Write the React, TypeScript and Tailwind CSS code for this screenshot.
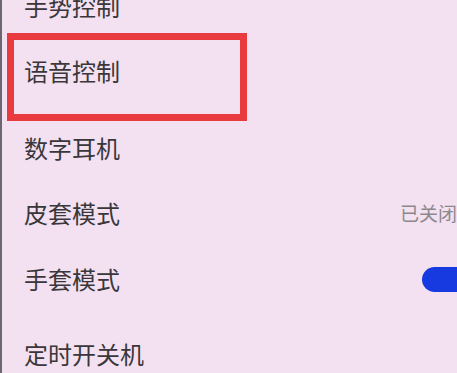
import React from "react";

type Row = {
  label: string;
  h: string;
  right?: "off" | "toggle";
};

const rows: Row[] = [
  { label: "手势控制", h: "h-[50px]" },
  { label: "语音控制", h: "h-[79px]" },
  { label: "数字耳机", h: "h-[76px]" },
  { label: "皮套模式", h: "h-[54px]", right: "off" },
  { label: "手套模式", h: "h-[78px]", right: "toggle" },
  { label: "定时开关机", h: "h-[72px]" },
];

export default function App() {
  return (
    <div
      className="relative w-[457px] h-[373px] overflow-hidden bg-[#f3e1f1]"
      style={{ fontFamily: '"Noto Sans CJK SC", "Noto Sans", sans-serif' }}
    >
      <div className="absolute left-0 top-0 bottom-0 w-[2px] bg-[#6e666e]" />
      <div className="flex flex-col w-[502px] mt-[-19px] pl-[24px] pr-[16px]">
        {rows.map((r) => (
          <div key={r.label} className={`flex items-center justify-between ${r.h}`}>
            <span className="text-[24px] leading-[30px] text-[#3a373a]">{r.label}</span>
            {r.right === "off" && (
              <div className="flex items-center gap-[15px]">
                <span className="text-[19px] leading-[24px] text-[#8c898d] whitespace-nowrap">已关闭</span>
                <svg width="14" height="20" viewBox="0 0 14 20" fill="none">
                  <path d="M3 3l7 7-7 7" stroke="#b0aab0" strokeWidth="2" />
                </svg>
              </div>
            )}
            {r.right === "toggle" && (
              <div className="flex items-center justify-end w-[64px] h-[25px] rounded-full bg-[#1639e0] px-[3px]">
                <div className="w-[19px] h-[19px] rounded-full bg-white" />
              </div>
            )}
          </div>
        ))}
      </div>
      <div className="absolute left-[7px] top-[33px] w-[240px] h-[88px] border-[7px] border-[#e93a3f]" />
    </div>
  );
}
